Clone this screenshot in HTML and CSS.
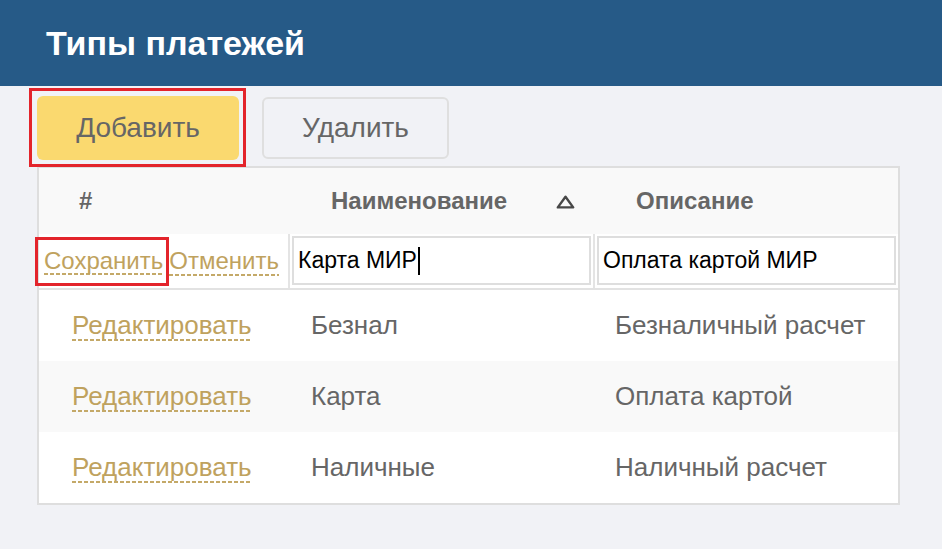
FILE: index.html
```html
<!DOCTYPE html>
<html lang="ru">
<head>
    <meta charset="UTF-8">
    <meta name="viewport" content="width=device-width, initial-scale=1.0">
    <title>Типы платежей</title>
    <link rel="stylesheet" href="styles.css">
</head>
<body>

    <!-- Header -->
    <div class="topbar">
        <h1>Типы платежей</h1>
    </div>

    <div class="page">
        <div class="toolbar">
            <span class="mark mark-btn"><button class="btn btn-add">Добавить</button></span>
            <button class="btn btn-delete">Удалить</button>
        </div>

        <div class="grid">
            <div class="row row-head">
                <div class="cell">#</div>
                <div class="cell sortable">
                    <span>Наименование</span>
                    <svg class="sort-icon" width="19" height="14" viewBox="0 0 19 14">
                        <path d="M9.5 1.8 L17.2 12.4 H1.8 Z" fill="none" stroke="#484848" stroke-width="2.4" stroke-linejoin="round"/>
                    </svg>
                </div>
                <div class="cell">Описание</div>
            </div>

            <div class="row row-edit">
                <div class="cell actions">
                    <span class="mark mark-link"><a href="#" class="link">Сохранить</a></span>
                    <a href="#" class="link">Отменить</a>
                </div>
                <div class="cell">
                    <div class="field">Карта МИР<span class="caret"></span></div>
                </div>
                <div class="cell">
                    <div class="field">Оплата картой МИР</div>
                </div>
            </div>

            <div class="row">
                <div class="cell"><a href="#" class="link">Редактировать</a></div>
                <div class="cell">Безнал</div>
                <div class="cell">Безналичный расчет</div>
            </div>
            <div class="row row-alt">
                <div class="cell"><a href="#" class="link">Редактировать</a></div>
                <div class="cell">Карта</div>
                <div class="cell">Оплата картой</div>
            </div>
            <div class="row">
                <div class="cell"><a href="#" class="link">Редактировать</a></div>
                <div class="cell">Наличные</div>
                <div class="cell">Наличный расчет</div>
            </div>
        </div>
    </div>

</body>
</html>
```

FILE: styles.css
```css
body {
    margin: 0;
    padding: 0;
    font-family: "Liberation Sans", Arial, sans-serif;
    background-color: #f1f2f6;
    color: #666;
}
.topbar {
    height: 86px;
    background-color: #265a87;
    display: flex;
    align-items: center;
    padding-left: 46px;
}
.topbar h1 {
    margin: 0;
    color: #fff;
    font-size: 34px;
    font-weight: bold;
}
.page {
    padding: 2px 0 0 29px;
}
.toolbar {
    display: flex;
    align-items: center;
    gap: 16px;
}
.mark {
    border: 3px solid #e3242b;
}
.mark-btn {
    display: flex;
    padding: 5px 4px 4px 5px;
}
.btn {
    font-family: inherit;
    font-size: 28px;
    color: #666;
    border-radius: 6px;
    cursor: pointer;
    outline: none;
}
.btn-add {
    width: 202px;
    height: 64px;
    border: none;
    background-color: #fad96f;
}
.btn-delete {
    width: 187px;
    height: 62px;
    border: 2px solid #dfdfdf;
    background-color: #f1f2f6;
}
.grid {
    width: 863px;
    box-sizing: border-box;
    margin: -1px 0 0 8px;
    border: 2px solid #dedede;
    background-color: #fff;
}
.row {
    display: grid;
    grid-template-columns: 249px 305px 305px;
    height: 71px;
    align-items: center;
    font-size: 26px;
}
.row .cell:nth-child(1) {
    padding-left: 33px;
}
.row .cell:nth-child(2) {
    padding-left: 23px;
}
.row .cell:nth-child(3) {
    padding-left: 22px;
}
.row-alt {
    background-color: #f9f9f9;
}
.row-head {
    height: 66px;
    background-color: #f9f9f9;
    font-size: 24px;
    font-weight: bold;
}
.row-head .cell:nth-child(1) {
    padding-left: 40px;
}
.row-head .cell:nth-child(2),
.row-head .cell:nth-child(3) {
    padding-left: 43px;
}
.sortable {
    display: flex;
    align-items: center;
    justify-content: space-between;
    padding-right: 18px;
}
.sort-icon {
    margin-top: 2px;
}
.row-edit {
    height: 56px;
    box-sizing: border-box;
    align-items: stretch;
    border-bottom: 2px solid #e2e2e2;
    font-size: 23px;
}
.row-edit .cell {
    padding: 2px 2px 0 2px;
}
.row-edit .cell:nth-child(2),
.row-edit .cell:nth-child(3) {
    padding-left: 2px;
    border-left: 2px solid #e4e4e4;
}
.row-edit .cell.actions {
    display: flex;
    align-items: baseline;
    padding: 3px 0 0 0;
    font-size: 24px;
}
.mark-link {
    margin-left: -4px;
    padding: 9px 3px 10px 6px;
    line-height: 24px;
}
.link {
    color: #bfa25e;
    text-decoration: none;
    padding-bottom: 1px;
    background-image: linear-gradient(to right, #c4a968 4px, transparent 4px);
    background-size: 6px 2px;
    background-repeat: repeat-x;
    background-position: 0 100%;
}
.field {
    height: 49px;
    box-sizing: border-box;
    border: 2px solid #dedede;
    padding: 0 4px;
    display: flex;
    align-items: center;
    color: #000;
    background-color: #fff;
}
.caret {
    width: 2px;
    height: 28px;
    margin-left: 1px;
    background-color: #000;
}
```
